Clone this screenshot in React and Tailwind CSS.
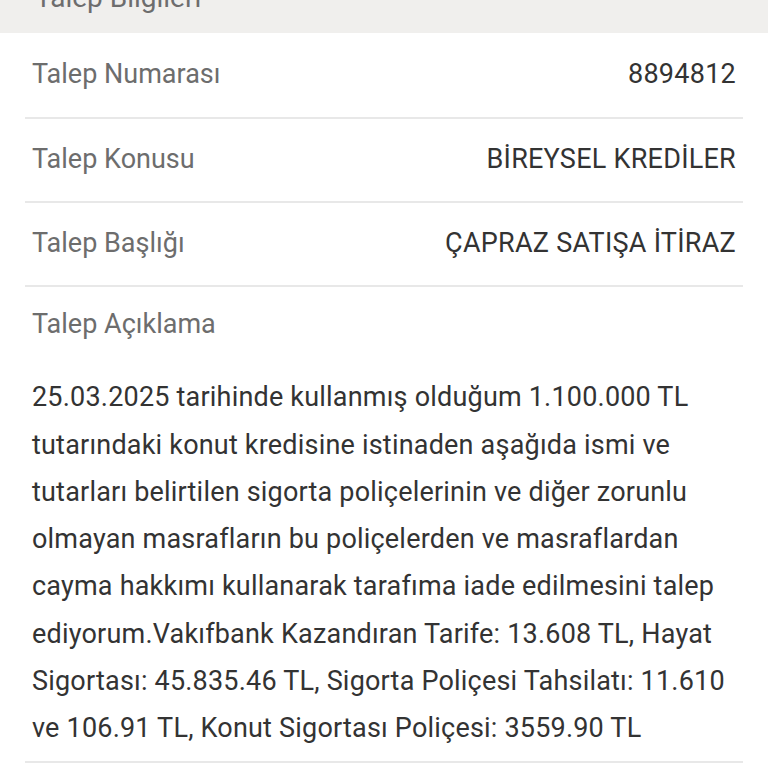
import React from 'react';

const rows = [
  { label: 'Talep Numarası', value: '8894812' },
  { label: 'Talep Konusu', value: 'BİREYSEL KREDİLER' },
  { label: 'Talep Başlığı', value: 'ÇAPRAZ SATIŞA İTİRAZ' },
];

const description =
  '25.03.2025 tarihinde kullanmış olduğum 1.100.000 TL tutarındaki konut kredisine istinaden aşağıda ismi ve tutarları belirtilen sigorta poliçelerinin ve diğer zorunlu olmayan masrafların bu poliçelerden ve masraflardan cayma hakkımı kullanarak tarafıma iade edilmesini talep ediyorum.Vakıfbank Kazandıran Tarife: 13.608 TL, Hayat Sigortası: 45.835.46 TL, Sigorta Poliçesi Tahsilatı: 11.610 ve 106.91 TL, Konut Sigortası Poliçesi: 3559.90 TL';

const InfoRow = ({ label, value, first }) => (
  <div
    className={`flex items-center justify-between px-[7px] border-b-2 border-[#e8e8e8] ${
      first ? 'h-[86px]' : 'h-[84px]'
    }`}
  >
    <span className="text-[#6d6d6d]">{label}</span>
    <span className="text-[#333333] tracking-[0.25px]">{value}</span>
  </div>
);

export default function App() {
  return (
    <div
      className="w-[768px] h-[768px] overflow-hidden bg-white text-[27px] leading-[47.3px]"
      style={{ fontFamily: 'Roboto, "Noto Sans", Arial, sans-serif' }}
    >
      <div className="h-[33px] bg-[#f0efed] overflow-hidden px-[35px]">
        <div className="mt-[-16px] text-[28px] leading-[28px] text-[#6d6d6d]">Talep Bilgileri</div>
      </div>

      <div className="mx-[25px] w-[718px]">
        {rows.map((r, i) => (
          <InfoRow key={r.label} label={r.label} value={r.value} first={i === 0} />
        ))}

        <div className="px-[7px] pt-[14px] pb-[8px] border-b-2 border-[#e8e8e8]">
          <div className="text-[#6d6d6d]">Talep Açıklama</div>
          <p className="mt-[26px] text-[#333333] tracking-[0.2px]">{description}</p>
        </div>
      </div>
    </div>
  );
}
